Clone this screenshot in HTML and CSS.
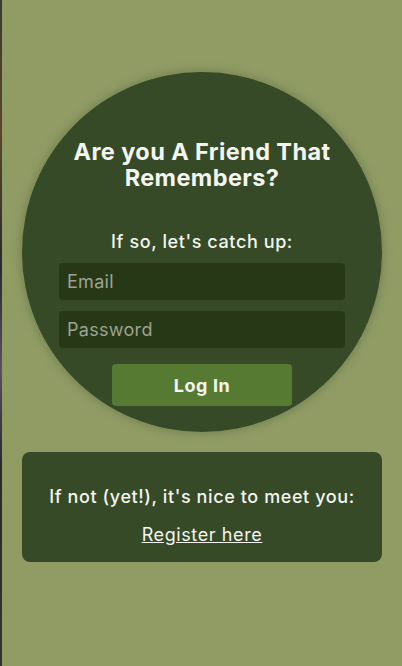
FILE: index.html
```html
<!DOCTYPE html>
<html>
<head>
<meta charset="utf-8">
<link rel="stylesheet" href="styles.css">
</head>
<body>
<div class="edge"></div>
<main class="page">
  <section class="circle">
    <h1 class="title">Are you A Friend That Remembers?</h1>
    <p class="lead">If so, let's catch up:</p>
    <form class="form">
      <input class="field" type="text" placeholder="Email">
      <input class="field" type="password" placeholder="Password">
      <button class="btn" type="button">Log In</button>
    </form>
  </section>
  <section class="card">
    <p class="card-text">If not (yet!), it's nice to meet you:</p>
    <a class="link" href="#">Register here</a>
  </section>
</main>
</body>
</html>
```
FILE: styles.css
```css
html, body {
  margin: 0;
  padding: 0;
  height: 100%;
}
body {
  background: #919c65;
  font-family: Inter, "Noto Sans", sans-serif;
  color: #f4f4f0;
  overflow: hidden;
  position: relative;
}
.edge {
  position: absolute;
  left: 0;
  top: 0;
  bottom: 0;
  width: 2px;
  background: linear-gradient(#3a3a30, #5a4630 20%, #2a2a2a 40%, #5a5060 55%, #2a2a2a 70%, #333 100%);
}
.page {
  display: flex;
  flex-direction: column;
  align-items: center;
  padding-top: 72px;
  padding-left: 2px;
  gap: 20px;
}
.circle {
  width: 360px;
  height: 360px;
  border-radius: 50%;
  background: #364a27;
  box-shadow: 0 0 8px 2px rgba(70, 90, 50, 0.35);
  display: flex;
  flex-direction: column;
  align-items: center;
  box-sizing: border-box;
  padding-top: 67px;
}
.title {
  margin: 0;
  width: 300px;
  text-align: center;
  font-size: 23.5px;
  line-height: 26px;
  font-weight: 700;
  letter-spacing: 0.4px;
}
.lead {
  margin: 41px 0 0;
  font-size: 18px;
  line-height: 20px;
  font-weight: 500;
  letter-spacing: 0.6px;
}
.form {
  margin-top: 11px;
  display: flex;
  flex-direction: column;
  align-items: center;
  gap: 11px;
}
.field {
  width: 286px;
  height: 37px;
  box-sizing: border-box;
  border: none;
  border-radius: 4px;
  background: #273816;
  padding: 0 8px;
  font-family: inherit;
  font-size: 18px;
  letter-spacing: 0.3px;
  color: #ddd;
  outline: none;
}
.field::placeholder {
  color: #9ea293;
}
.btn {
  margin-top: 5px;
  width: 180px;
  height: 42px;
  border: none;
  border-radius: 4px;
  background: #577a33;
  color: #f4f4f0;
  font-family: inherit;
  font-size: 18px;
  font-weight: 700;
  letter-spacing: 0.6px;
}
.card {
  width: 360px;
  height: 110px;
  box-sizing: border-box;
  border-radius: 8px;
  background: #364a27;
  display: flex;
  flex-direction: column;
  align-items: center;
  padding-top: 35px;
}
.card-text {
  margin: 0;
  font-size: 18px;
  line-height: 20px;
  font-weight: 500;
  letter-spacing: 0.6px;
}
.link {
  margin-top: 18px;
  font-size: 18px;
  line-height: 20px;
  letter-spacing: 0.6px;
  color: #f4f4f0;
  text-decoration: underline;
}
```
